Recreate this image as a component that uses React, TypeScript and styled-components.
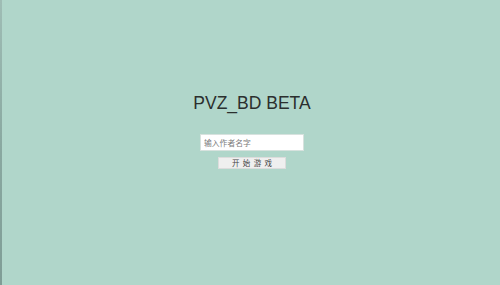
import React from 'react';
import styled, { createGlobalStyle } from 'styled-components';

// STYLE
const GlobalStyle = createGlobalStyle`
    html, body {
        margin: 0;
        padding: 0;
        height: 100%;
    }
    #root {
        height: 100%;
    }
`;

const Page = styled.div`
    display: flex;
    height: 285px;
    width: 500px;
    background-color: #b0d6ca;
    font-family: 'Liberation Sans', Arial, 'Noto Sans CJK SC', sans-serif;
    overflow: hidden;
`;

const EdgeStrip = styled.div`
    width: 2px;
    background: linear-gradient(#9fbdb5, #8aa9a1 50%, #7f9d96);
`;

const Main = styled.div`
    flex: 1;
    display: flex;
    flex-direction: column;
    align-items: center;
    padding-top: 92px;
    padding-left: 2px;
`;

const Title = styled.h1`
    margin: 0;
    font-size: 17.5px;
    font-weight: normal;
    color: #2b2f2e;
    line-height: 22px;
`;

const NameInput = styled.input`
    box-sizing: border-box;
    margin-top: 20px;
    width: 104px;
    height: 17px;
    padding: 0 3px;
    border: 1px solid #d7e2de;
    background: #fff;
    font-family: 'Noto Sans CJK SC', sans-serif;
    font-size: 7.8px;
    outline: none;

    &::placeholder {
        color: #7a7a7a;
    }
`;

const StartButton = styled.button`
    box-sizing: border-box;
    margin-top: 6px;
    width: 68px;
    height: 12px;
    padding: 0;
    border: 1px solid #dcdcdc;
    background: #efefef;
    color: #444;
    font-family: 'Noto Sans CJK SC', sans-serif;
    font-size: 7.5px;
    line-height: 10px;
    letter-spacing: 3.4px;
    text-indent: 3.4px;
`;

const App: React.FC = () => {
    return (
        <Page>
            <GlobalStyle />
            <EdgeStrip />
            <Main>
                {/* SECTION :: TITLE */}
                <Title>PVZ_BD BETA</Title>
                {/* SECTION :: FORM */}
                <NameInput placeholder="输入作者名字" />
                <StartButton>开始游戏</StartButton>
            </Main>
        </Page>
    );
};
export default App;
